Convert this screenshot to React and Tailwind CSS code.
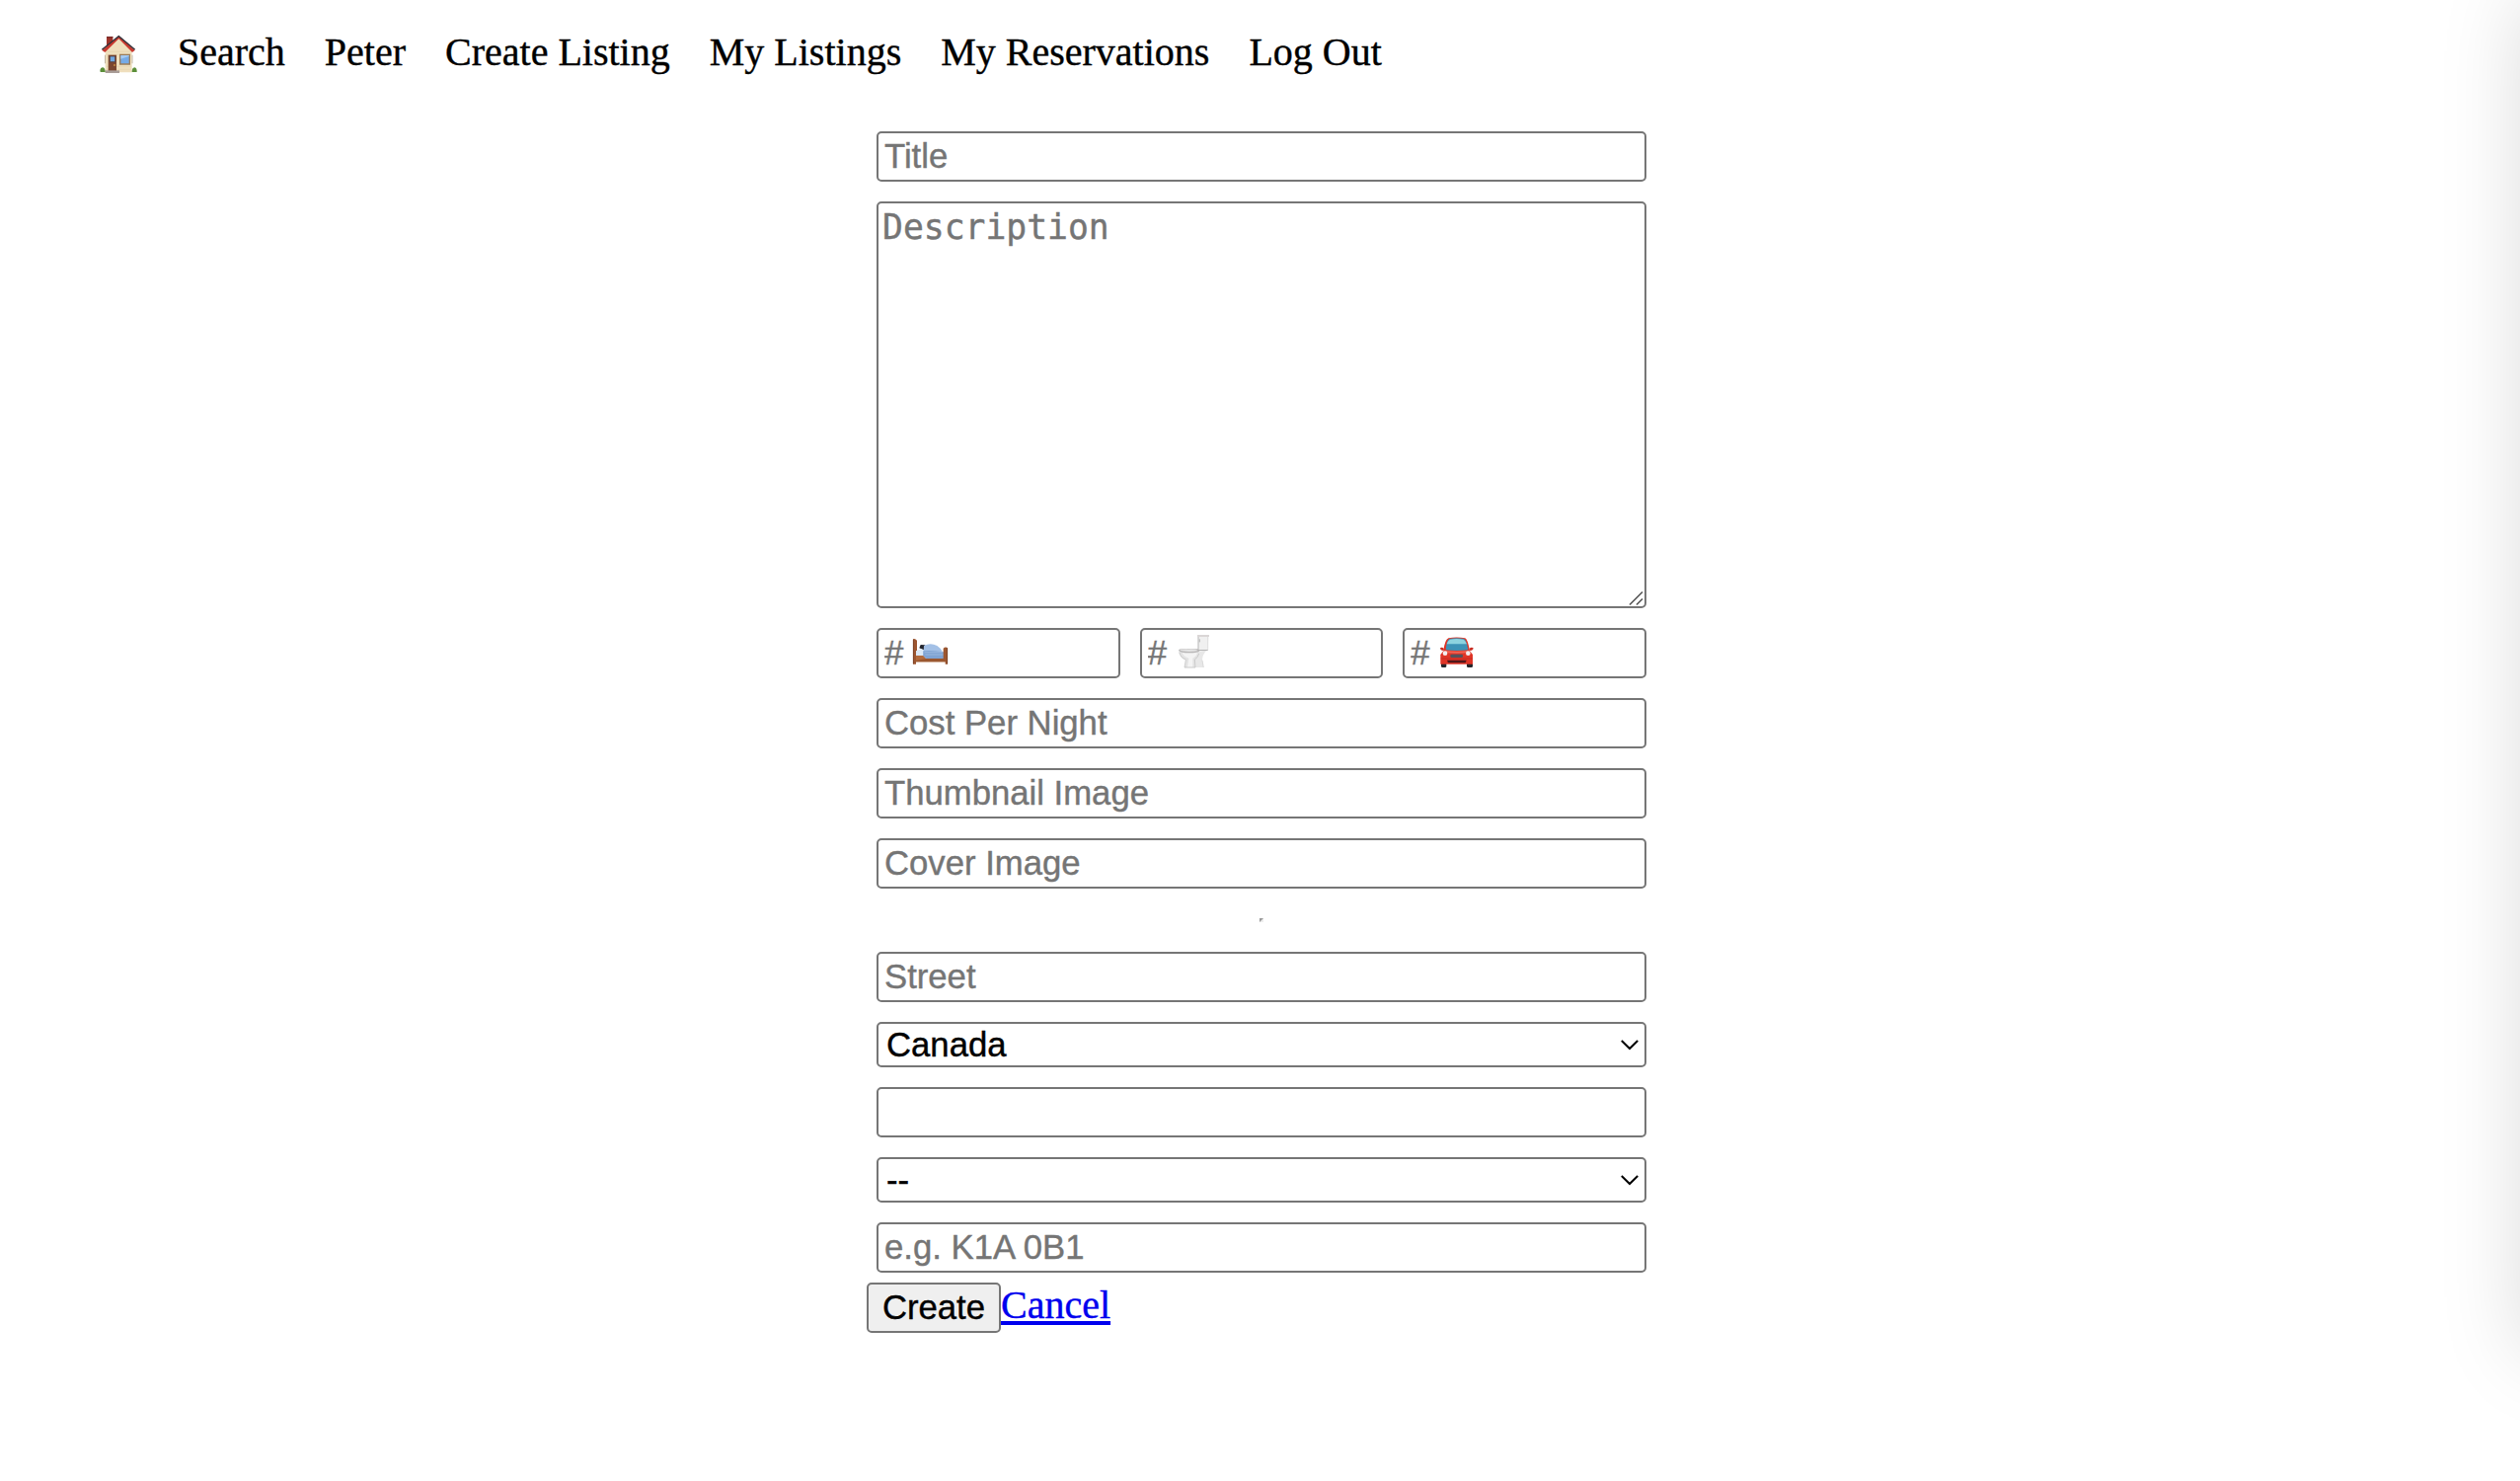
const box =
  'block w-full h-[51px] rounded-[5px] border-2 border-[#767676] bg-white pl-[6px] pr-[5px] pb-[1px] text-[34.7px] leading-[40px] placeholder:text-[#757575] placeholder:opacity-100 outline-none [-webkit-text-stroke:0.4px]';

function House() {
  return (
    <svg className="block h-10 w-10" viewBox="30 30 120 120" aria-label="Home">
      <path d="M54 36H73V62L54 76Z" fill="#9d342b" />
      <path d="M54 36H73V40H54Z" fill="#7a2a28" />
      <path d="M91 39L131 78V145H50V78Z" fill="#efdfbd" />
      <path d="M48 92H50V118H48ZM131 92H133V118H131Z" fill="#a99a82" />
      <path d="M56 82H126M53 91H128M53 127H128M53 136H128" stroke="#e2cfa8" strokeWidth="1.5" />
      <path d="M91 43L132 84L140 78L91 34L40 78L49 84Z" fill="#c93a30" />
      <path d="M40 76L91 35L140 76" fill="none" stroke="#33323a" strokeWidth="4" />
      <path d="M59 92H84V142H59Z" fill="#7b4630" />
      <path d="M64 96H80V113H64Z" fill="#6fa6e0" stroke="#4c3432" strokeWidth="2" />
      <circle cx="78" cy="123" r="3" fill="#c58a3d" />
      <path d="M95 91H124V120H95Z" fill="#76aae6" stroke="#9b7c58" strokeWidth="4" />
      <path d="M97 104L122 96V93H97Z" fill="#a5caf2" />
      <path d="M50 139H93V147H50Z" fill="#a99d98" />
      <path d="M34 142Q34 130 43 130Q50 132 50 144H36Z" fill="#5c8f3a" />
      <path d="M131 144Q131 131 139 130Q147 132 146 144Z" fill="#5c8f3a" />
    </svg>
  );
}

function Bed() {
  return (
    <svg className="absolute left-[36px] top-[9px] h-[29px] w-[37px]" viewBox="162 165 111 87">
      <path d="M172 222H264V241H172Z" fill="#b26a3c" />
      <path d="M172 238L215 229H264V241H172Z" fill="#9a5730" />
      <path d="M174 206H200V222H174Z" fill="#c9dcf0" />
      <path d="M184 199L188 189L202 190L200 206Z" fill="#23252e" />
      <path d="M174 209L190 201L206 211L196 221H174Z" fill="#dce9f6" />
      <path d="M198 192Q218 181 238 192Q249 199 254 210L264 212V231H204L196 222Z" fill="#a3c0e6" />
      <path d="M196 208Q218 204 264 212V231H206L196 222Z" fill="#7fa3d3" />
      <path d="M200 212H262M202 219H262" stroke="#a7c2e5" strokeWidth="2" />
      <path d="M165 172Q171 169 177 176V207H174V248H165Z" fill="#9c5630" />
      <path d="M257 200Q264 194 270 199V248H263V232H257Z" fill="#9c5630" />
      <path d="M166 173V247M269 199V247" stroke="#6c3a22" strokeWidth="2" />
    </svg>
  );
}

function Toilet() {
  return (
    <svg className="absolute left-[38px] top-[6px] h-[36px] w-[33px]" viewBox="24 18 99 108">
      <path d="M86 26H118L116 68H86Z" fill="#f0f0f0" />
      <path d="M84 21H120V27H84Z" fill="#dad6d6" />
      <path d="M87 27V66" stroke="#b8b8b8" strokeWidth="3" />
      <path d="M91 34V43" stroke="#999999" strokeWidth="2" />
      <path d="M116 27V66" stroke="#d6d6d6" strokeWidth="2" />
      <path d="M76 72L112 68Q99 82 99 98L103 120H74Z" fill="#e8e8e8" />
      <path d="M99 98L103 120" stroke="#cccccc" strokeWidth="2" />
      <path d="M28 68Q29 92 49 97L45 121H78L76 96Q90 88 90 68Z" fill="#e3e3e3" />
      <path d="M38 76Q44 89 58 92L54 119H70V92Q82 86 84 76Z" fill="#f4f4f4" />
      <path d="M29 74Q34 92 49 96L45 120H78L76 96Q87 89 89 78" fill="none" stroke="#bebebe" strokeWidth="2" />
      <path d="M27 68Q28 64 40 64H86L91 70Q84 76 60 76Q34 76 27 68Z" fill="#b9b7b7" />
      <path d="M30 67Q40 64 58 65Q78 64 87 69Q76 72 58 72Q38 72 30 67Z" fill="#e4e4e4" />
      <path d="M84 66H116V69H88Z" fill="#b5b5b5" />
    </svg>
  );
}

function Car() {
  return (
    <svg className="absolute left-[37px] top-[8px] h-[33px] w-[36px]" viewBox="564 162 108 99">
      <path d="M570 240H586V255Q586 258 582 258H574Q570 258 570 254ZM648 240H666V254Q666 258 662 258H652Q648 258 648 254Z" fill="#24262b" />
      <path d="M567 199Q572 195 579 201L577 207Q568 207 567 199ZM668 199Q662 195 655 201L658 207Q667 207 668 199Z" fill="#c92d22" />
      <path d="M577 208Q581 174 592 169Q617 164 643 169Q651 173 657 208L666 219V248H568V219Z" fill="#df3527" />
      <path d="M584 205Q586 178 595 171Q617 167 640 171Q648 178 652 205Q617 209 584 205Z" fill="#3d92b6" />
      <path d="M587 187Q590 176 597 173Q617 169 638 173Q644 177 648 187Z" fill="#8dd3df" />
      <path d="M582 207Q617 212 653 207L657 212Q617 218 578 212Z" fill="#ef6353" />
      <circle cx="582" cy="215" r="7" fill="#f3eeee" />
      <circle cx="652" cy="215" r="7" fill="#f3eeee" />
      <rect x="598" y="218" width="38" height="10" rx="4" fill="#56515a" />
      <path d="M588 236H647L644 244H591Z" fill="#51171a" />
      <path d="M569 231H666" stroke="#bd271f" strokeWidth="2" />
    </svg>
  );
}

function Count({ children }) {
  return (
    <div className="relative">
      <input className={box} placeholder="#" />
      {children}
    </div>
  );
}

function Select({ value }) {
  return (
    <div className="relative">
      <select className="block h-[46px] w-full appearance-none rounded-[5px] border-2 border-[#767676] bg-white pl-[8px] text-[34.7px] leading-[40px] text-black outline-none [-webkit-text-stroke:0.4px]">
        <option>{value}</option>
      </select>
      <svg className="pointer-events-none absolute right-[7px] top-[16px] h-[14px] w-[21px]" viewBox="0 0 21 14" fill="none" stroke="#000" strokeWidth="2">
        <path d="M2.8 3L11 11L19.2 3" />
      </svg>
    </div>
  );
}

const links = ['Search', 'Peter', 'Create Listing', 'My Listings', 'My Reservations', 'Log Out'];

export default function App() {
  return (
    <div className="relative h-[1500px] w-full overflow-hidden bg-white font-['Liberation_Sans',Arial,sans-serif] text-black">
      <nav className="flex h-[113px] items-start gap-10 pl-[100px] pt-[30px] font-['Liberation_Serif','Times_New_Roman',serif] text-[40px] leading-[46px] [-webkit-text-stroke:0.4px]">
        <a href="#" className="pt-[5px]"><House /></a>
        {links.map((l) => (
          <a key={l} href="#" className="whitespace-nowrap">{l}</a>
        ))}
      </nav>

      <form className="ml-[878px] w-[800px] pt-5">
        <div className="flex flex-col gap-5 px-[10px]">
          <input className={box} placeholder="Title" />
          <div className="relative">
            <textarea
              className="block h-[412px] w-full resize-none rounded-[5px] border-2 border-[#767676] bg-white px-[4px] pt-[4px] font-['DejaVu_Sans_Mono',monospace] text-[34.7px] leading-[41px] outline-none placeholder:text-[#757575] placeholder:opacity-100 [-webkit-text-stroke:0.4px]"
              placeholder="Description"
            />
            <svg className="pointer-events-none absolute bottom-[2px] right-[3px] h-[16px] w-[16px]" viewBox="0 0 16 16" stroke="#555" strokeWidth="1.6">
              <path d="M2 14.5L15 1.5M9 14.5L15 8.5" />
            </svg>
          </div>
          <div className="grid grid-cols-3 gap-5">
            <Count><Bed /></Count>
            <Count><Toilet /></Count>
            <Count><Car /></Count>
          </div>
          <input className={box} placeholder="Cost Per Night" />
          <input className={box} placeholder="Thumbnail Image" />
          <input className={box} placeholder="Cover Image" />
          <hr className="mx-auto my-[10px] h-1 w-1 border-2 border-b-[#eeeeee] border-l-[#9a9a9a] border-r-[#eeeeee] border-t-[#9a9a9a]" />
          <input className={box} placeholder="Street" />
          <Select value="Canada" />
          <input className={box} />
          <Select value="--" />
          <input className={box} placeholder="e.g. K1A 0B1" />
        </div>
        <div className="mt-[10px] flex items-start">
          <button type="button" className="h-[51px] w-[136px] rounded-[5px] border-2 border-[#767676] bg-[#efefef] pb-[1px] text-[34.7px] leading-[40px] [-webkit-text-stroke:0.4px]">
            Create
          </button>
          <a href="#" className="font-['Liberation_Serif','Times_New_Roman',serif] text-[40px] leading-[46px] text-[#0000ee] underline decoration-4 underline-offset-[3px] [-webkit-text-stroke:0.4px]">
            Cancel
          </a>
        </div>
      </form>

      <div className="pointer-events-none absolute left-[calc(100%+4px)] top-[-4px] h-[1374px] w-[400px] shadow-[0_0_80px_rgba(0,0,0,0.15)]" />
    </div>
  );
}
